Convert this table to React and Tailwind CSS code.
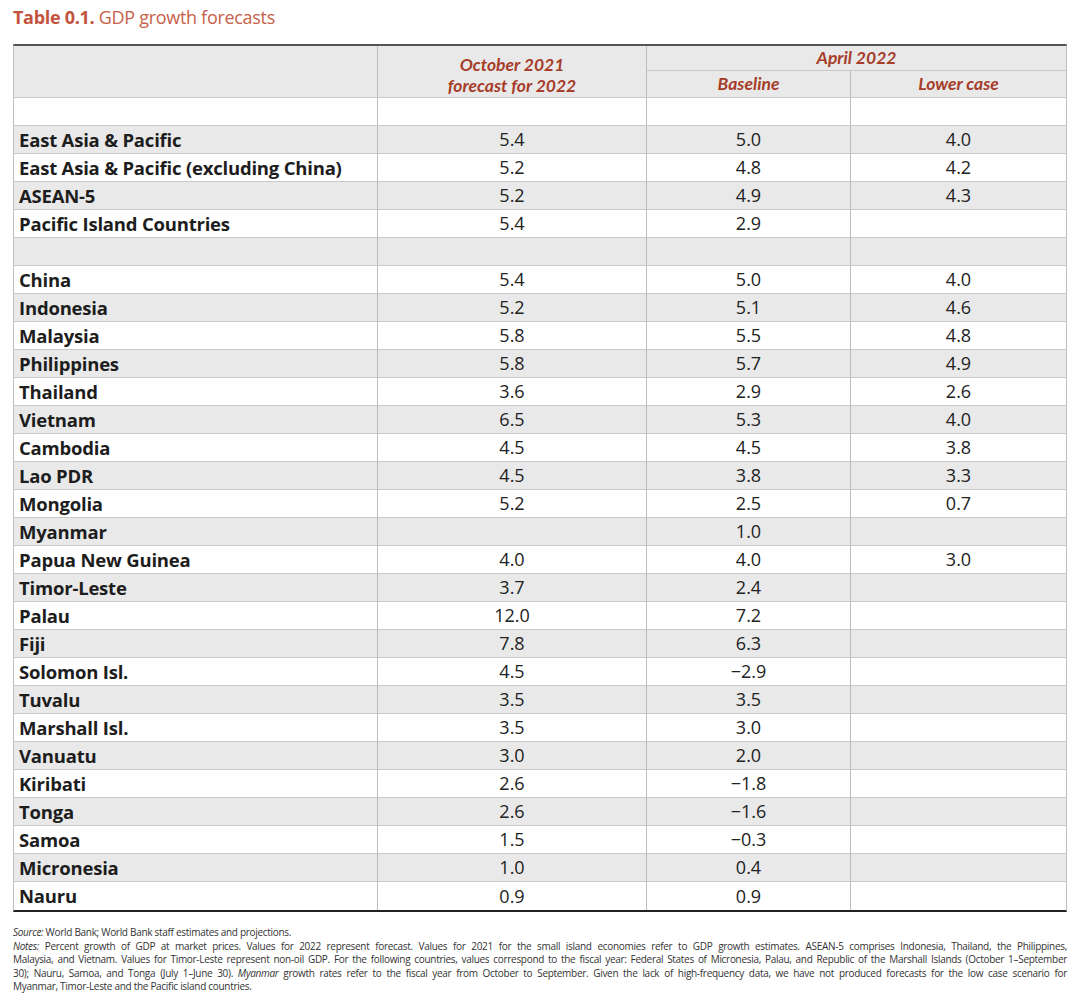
const groups = [
  { name: 'East Asia & Pacific', oct: '5.4', base: '5.0', low: '4.0' },
  { name: 'East Asia & Pacific (excluding China)', oct: '5.2', base: '4.8', low: '4.2' },
  { name: 'ASEAN-5', oct: '5.2', base: '4.9', low: '4.3' },
  { name: 'Pacific Island Countries', oct: '5.4', base: '2.9', low: '' },
];

const countries = [
  { name: 'China', oct: '5.4', base: '5.0', low: '4.0' },
  { name: 'Indonesia', oct: '5.2', base: '5.1', low: '4.6' },
  { name: 'Malaysia', oct: '5.8', base: '5.5', low: '4.8' },
  { name: 'Philippines', oct: '5.8', base: '5.7', low: '4.9' },
  { name: 'Thailand', oct: '3.6', base: '2.9', low: '2.6' },
  { name: 'Vietnam', oct: '6.5', base: '5.3', low: '4.0' },
  { name: 'Cambodia', oct: '4.5', base: '4.5', low: '3.8' },
  { name: 'Lao PDR', oct: '4.5', base: '3.8', low: '3.3' },
  { name: 'Mongolia', oct: '5.2', base: '2.5', low: '0.7' },
  { name: 'Myanmar', oct: '', base: '1.0', low: '' },
  { name: 'Papua New Guinea', oct: '4.0', base: '4.0', low: '3.0' },
  { name: 'Timor-Leste', oct: '3.7', base: '2.4', low: '' },
  { name: 'Palau', oct: '12.0', base: '7.2', low: '' },
  { name: 'Fiji', oct: '7.8', base: '6.3', low: '' },
  { name: 'Solomon Isl.', oct: '4.5', base: '\u22122.9', low: '' },
  { name: 'Tuvalu', oct: '3.5', base: '3.5', low: '' },
  { name: 'Marshall Isl.', oct: '3.5', base: '3.0', low: '' },
  { name: 'Vanuatu', oct: '3.0', base: '2.0', low: '' },
  { name: 'Kiribati', oct: '2.6', base: '\u22121.8', low: '' },
  { name: 'Tonga', oct: '2.6', base: '\u22121.6', low: '' },
  { name: 'Samoa', oct: '1.5', base: '\u22120.3', low: '' },
  { name: 'Micronesia', oct: '1.0', base: '0.4', low: '' },
  { name: 'Nauru', oct: '0.9', base: '0.9', low: '' },
];

// blank row, groups, blank row, countries -> alternating white / gray starting white
const rows = [{ blank: true }, ...groups, { blank: true }, ...countries];

function Row({ row, gray, last }) {
  const bg = gray ? 'bg-[#e9e9e9]' : 'bg-white';
  const bb = last ? '' : 'border-b border-[#c9c9c9]';
  return (
    <div className={`grid grid-cols-[364px_269px_204px_215px] h-[28px] ${bg} ${bb}`}>
      <div className="border-r border-[#bdbdbd] pl-[5px] flex items-center text-[18.5px] font-bold text-[#1d1d1d] tracking-[-0.2px]">
        {row.name}
      </div>
      <div className="border-r border-[#bdbdbd] flex items-center justify-center text-[18px] text-[#222]">{row.oct}</div>
      <div className="border-r border-[#bdbdbd] flex items-center justify-center text-[18px] text-[#222]">{row.base}</div>
      <div className="flex items-center justify-center text-[18px] text-[#222]">{row.low}</div>
    </div>
  );
}

export default function App() {
  return (
    <div className="w-[1080px] h-[997px] bg-white font-['Open_Sans',sans-serif] overflow-hidden">
      <div className="pl-[13px] pt-[4px] h-[44px] text-[18px] leading-[26px] tracking-[-0.3px]">
        <span className="font-bold text-[#c2533d]">Table 0.1.</span>{' '}
        <span className="text-[#c8604a]">GDP growth forecasts</span>
      </div>

      <div className="ml-[13px] w-[1054px] border-t-2 border-b-2 border-t-[#555] border-b-[#222] border-x border-x-[#bdbdbd]">
        {/* header */}
        <div className="grid grid-cols-[364px_269px_419px] h-[52px] bg-[#e9e9e9] border-b border-[#c9c9c9] text-[#a63d29] italic font-bold text-[17.5px] font-['Lato',sans-serif]">
          <div className="border-r border-[#bdbdbd]" />
          <div className="border-r border-[#bdbdbd] flex flex-col items-center justify-center leading-[21px] pt-[6px]">
            <span>October 2021</span>
            <span>forecast for 2022</span>
          </div>
          <div className="flex flex-col">
            <div className="h-[25px] border-b border-[#c9c9c9] flex items-center justify-center">April 2022</div>
            <div className="flex-1 grid grid-cols-[204px_215px]">
              <div className="border-r border-[#bdbdbd] flex items-center justify-center">Baseline</div>
              <div className="flex items-center justify-center">Lower case</div>
            </div>
          </div>
        </div>

        {rows.map((row, i) => (
          <Row key={i} row={row} gray={i % 2 === 1} last={i === rows.length - 1} />
        ))}
      </div>

      <div className="ml-[13px] w-[1054px] mt-[14px] text-[10px] leading-[13.6px] text-[#333] tracking-[-0.3px]">
        <div><i>Source:</i> World Bank; World Bank staff estimates and projections.</div>
        <div className="text-justify [text-align-last:justify] whitespace-nowrap">
          <i>Notes:</i> Percent growth of GDP at market prices. Values for 2022 represent forecast. Values for 2021 for the small island economies refer to GDP growth estimates. ASEAN-5 comprises Indonesia, Thailand, the Philippines,
        </div>
        <div className="text-justify [text-align-last:justify]">
          Malaysia, and Vietnam. Values for Timor-Leste represent non-oil GDP. For the following countries, values correspond to the fiscal year: Federal States of Micronesia, Palau, and Republic of the Marshall Islands (October&nbsp;1–September
        </div>
        <div className="text-justify [text-align-last:justify]">
          30); Nauru, Samoa, and Tonga (July 1–June 30). <i>Myanmar</i> growth rates refer to the fiscal year from October to September. Given the lack of high-frequency data, we have not produced forecasts for the low case scenario for
        </div>
        <div>Myanmar, Timor-Leste and the Pacific island countries.</div>
      </div>
    </div>
  );
}
